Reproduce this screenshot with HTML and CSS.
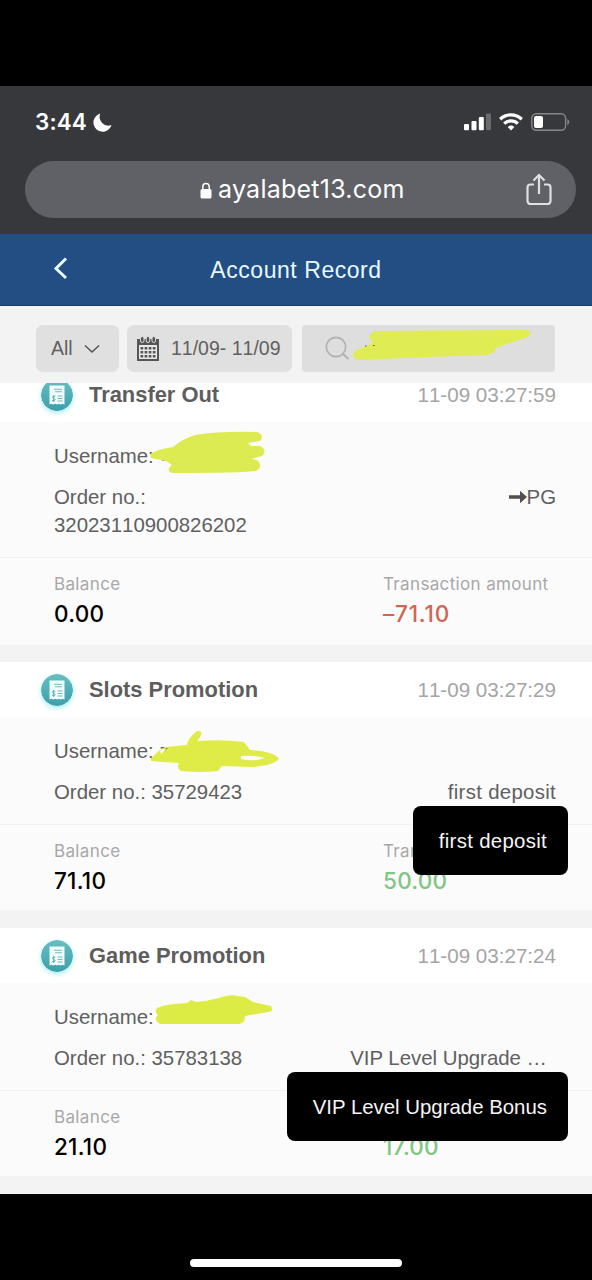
FILE: index.html
```html
<!DOCTYPE html>
<html lang="en">
<head>
<meta charset="utf-8">
<title>Account Record</title>
<link rel="stylesheet" href="styles.css">
</head>
<body>
<svg class="defs" width="0" height="0">
  <defs>
    <linearGradient id="teal" x1="0" y1="0" x2="0" y2="1"><stop offset="0" stop-color="#66bfc3"/><stop offset="1" stop-color="#3b9faa"/></linearGradient>
    <symbol id="receipt" viewBox="0 0 32 32">
      <circle cx="16" cy="16" r="16" fill="url(#teal)"/>
      <path d="M8.5 6.500H23.500v19l-1.900-.8-1.900.8-1.900-.8-1.800.8-1.900-.8-1.900.8-1.900-.8-1.800.8z" fill="#f3fbfb"/>
      <path d="M13 10.300h8M14 12.800h7M16.500 17h5M16.500 19.500h5M16.500 22h5" stroke="#6fbcc1" stroke-width="1.100"/>
      <path d="M14.300 17.400c-2.800-1-3.800 1.400-1.600 2.100 2.500.6 1.600 2.900-1.600 1.900M12.700 16v7" fill="none" stroke="#58aeb5" stroke-width="1"/>
    </symbol>
  </defs>
</svg>
<div class="phone">
  <header class="browser">
    <div class="status">
      <span class="time">3:44</span>
      <svg class="moon" width="19" height="19" viewBox="0 0 19 19"><path d="M7.300.6A9.200 9.200 0 1 0 18.500 12 8.700 8.700 0 0 1 7.300.6z" fill="#fff"/></svg>
      <svg class="signals" width="107" height="20" viewBox="0 0 107 20">
        <g fill="#fff"><rect x="1" y="12" width="5" height="6.300" rx="1"/><rect x="8.500" y="9" width="5" height="9.300" rx="1"/><rect x="15.800" y="5" width="5" height="13.300" rx="1"/><rect x="23" y="1.500" width="5" height="16.800" rx="1" opacity=".25"/></g>
        <g fill="none" stroke="#fff" stroke-width="3.300"><path d="M37.200 7.300a15.500 15.500 0 0 1 21.600 0"/><path d="M41.200 11.600a9.800 9.800 0 0 1 13.600 0"/></g>
        <path d="M48 18.500l-3.300-3.500a5 5 0 0 1 6.600 0z" fill="#fff"/>
        <rect x="68.800" y="1.700" width="33.800" height="16.600" rx="4.500" fill="none" stroke="#85868a" stroke-width="1.400"/>
        <rect x="71" y="4" width="9" height="12" rx="2" fill="#fff"/><path d="M104.300 7c2.500 1 2.500 5 0 6z" fill="#85868a"/>
      </svg>
    </div>
    <div class="address">
      <svg class="lock" width="12" height="17" viewBox="0 0 12 17"><rect x=".5" y="7" width="11" height="9.500" rx="1.600" fill="#fff"/><path d="M2.800 8V4.600a3.200 3.200 0 0 1 6.400 0V8" fill="none" stroke="#fff" stroke-width="1.500"/></svg>
      <span class="url">ayalabet13.com</span>
      <svg class="share" width="28" height="34" viewBox="0 0 28 34" fill="none" stroke="#dfe0e2" stroke-width="2.200"><path d="M9 11.500H5.500a3 3 0 0 0-3 3V28a3 3 0 0 0 3 3h17a3 3 0 0 0 3-3V14.500a3 3 0 0 0-3-3H19M14 21V2M8.500 7.500L14 2l5.500 5.500"/></svg>
    </div>
  </header>
  <nav class="nav">
    <svg class="back" width="16" height="24" viewBox="0 0 16 24"><path d="M13 2.500L3 12.500l10 9.500" fill="none" stroke="#e8faff" stroke-width="3"/></svg>
    <h1 class="title">Account Record</h1>
  </nav>
  <div class="filters">
    <div class="filter all"><span>All</span><svg width="16" height="10" viewBox="0 0 16 10"><path d="M1 1.500l7 6.500 7-6.500" fill="none" stroke="#555" stroke-width="1.500"/></svg></div>
    <div class="filter dates">
      <svg width="22" height="25" viewBox="0 0 22 25"><path d="M0 3h22v22H0z" fill="#555"/><path d="M2 9h18v14H2z" fill="#e8e8e8"/><path d="M3.500 12.300h15M3.500 16.300h15M3.500 20.300h15" stroke="#555" stroke-width="2.600" stroke-dasharray="2.700 1.400"/><g fill="#555" stroke="#e0e0e0"><rect x="3.500" y=".5" width="3.500" height="6" rx="1.700"/><rect x="9.200" y=".5" width="3.500" height="6" rx="1.700"/><rect x="15" y=".5" width="3.500" height="6" rx="1.700"/></g></svg>
      <span>11/09- 11/09</span>
    </div>
    <div class="filter search">
      <svg width="25" height="25" viewBox="0 0 25 25" fill="none" stroke="#b1b1b1"><circle cx="11" cy="11" r="9.700" stroke-width="1.700"/><path d="M18 18l5.500 5" stroke-width="2"/></svg>
      <svg class="scribble" width="253" height="47" viewBox="302 325 253 47"><path d="M374 331L524 330Q535 331 528 337L495 348Q497 353 487 355L404 358 358 360Q350 356 355 351L368 345Q375 344 371 340 366 337 374 331z" fill="#e0ec54"/><path d="M365 346h1.500M373 345.500h1.500" stroke="#555"/></svg>
    </div>
  </div>
  <main class="list">
    <article class="card first">
      <div class="head"><svg class="badge"><use href="#receipt"/></svg><h2>Transfer Out</h2><time>11-09 03:27:59</time></div>
      <div class="info"><p>Username: </p><div class="row"><p>Order no.:<br>32023110900826202</p><p class="note"><svg width="18" height="14" viewBox="0 0 18 14"><path d="M0 5.200h11V.8L18 7l-7 6.200V8.800H0z" fill="#505050"/></svg>PG</p></div></div>
      <div class="sums"><div><small>Balance</small><b>0.00</b></div><div><small>Transaction amount</small><b class="minus">–71.10</b></div></div>
      <svg class="scribble" width="592" height="279" viewBox="0 367 592 279"><path d="M162 460l5-1" stroke="#777" stroke-width="2"/><path d="M150 454Q158 449 173 447 184 438 195 435 220 431 257 432 265 435 260 441L248 443 251 446 260 446Q268 450 262 456L251 459 257 460Q264 466 256 471L244 472Q220 473 172 473 165 470 172 465L166 461 151 458z" fill="#ddeb53"/></svg>
    </article>
    <article class="card">
      <div class="head"><svg class="badge"><use href="#receipt"/></svg><h2>Slots Promotion</h2><time>11-09 03:27:29</time></div>
      <div class="info"><p>Username: z</p><div class="row"><p>Order no.: 35729423</p><p class="note wide">first deposit</p></div></div>
      <div class="sums"><div><small>Balance</small><b>71.10</b></div><div><small>Transaction amount</small><b class="plus">50.00</b></div></div>
      <svg class="scribble" width="592" height="248" viewBox="0 662 592 248"><path fill-rule="evenodd" d="M151 758L160 750 165 747 187 745Q188 738 197 731 204 730 200 737L197 741Q224 739 244 742L250 750Q272 751 279 758 277 765 252 767L222 766 218 771Q200 773 181 771 176 768 179 763 162 762 151 761zM160 750L161 754 168 748zM241 756L241 759Q255 762 265 758 254 755 241 756z" fill="#dfec47"/></svg>
      <div class="tip wide">first deposit</div>
    </article>
    <article class="card last">
      <div class="head"><svg class="badge"><use href="#receipt"/></svg><h2>Game Promotion</h2><time>11-09 03:27:24</time></div>
      <div class="info"><p>Username: </p><div class="row"><p>Order no.: 35783138</p><p class="note cut">VIP Level Upgrade …</p></div></div>
      <div class="sums"><div><small>Balance</small><b>21.10</b></div><div><small>Transaction amount</small><b class="plus">17.00</b></div></div>
      <svg class="scribble" width="592" height="248" viewBox="0 928 592 248"><path d="M157 1008Q165 1004 187 1003L191 1000 196 1002Q208 1001 219 998 231 994 237 996L245 997 253 1002 271 1006Q274 1012 268 1012L245 1016Q245 1024 238 1024L160 1024Q153 1020 158 1015 154 1012 157 1008z" fill="#ddeb45"/></svg>
      <div class="tip">VIP Level Upgrade Bonus</div>
    </article>
  </main>
  <footer class="home"><span></span></footer>
</div>
</body>
</html>
```

FILE: styles.css
```css
* { box-sizing: border-box; }
body { margin: 0; background: #000; font-family: "Liberation Sans", Arial, sans-serif; }
h1, h2, p { margin: 0; font-weight: 400; }
svg { display: block; flex: none; }
.defs { position: absolute; }
.phone { display: flex; flex-direction: column; width: 592px; height: 1280px; padding-top: 86px; overflow: hidden; background: #000; }
.browser { flex: none; height: 148px; padding: 0 16px 0 25px; background: #37383b; color: #fff; }
.status { display: flex; align-items: center; height: 75px; padding: 0 6px 3px 10px; }
.time { width: 58px; font: 600 22.500px/30px Inter, sans-serif; letter-spacing: .1px; white-space: nowrap; }
.signals { margin-left: auto; }
.address { display: flex; align-items: center; height: 57px; padding: 0 23px 0 175px; border-radius: 29px; background: #5f6166; }
.lock { margin-top: 1px; }
.url { margin-left: 6px; margin-top: -1px; font: 400 25px/32px Inter, sans-serif; letter-spacing: .25px; }
.share { margin-left: auto; }
.nav { display: grid; grid-template-columns: 1fr auto 1fr; align-items: center; flex: none; height: 72px; padding: 0 53px; background: #234e84; color: #e8faff; border-bottom: 1px solid #20395a; }
.back { margin-bottom: 3px; }
.title { padding-top: 2px; font-size: 23px; letter-spacing: .55px; }
.filters { display: flex; flex: none; gap: 8px; height: 77px; padding: 19px 37px 11px 36px; background: #f3f3f3; }
.filter { display: flex; align-items: center; border-radius: 7px; background: #e0e0e0; color: #606060; font-size: 19.500px; }
.all { width: 83px; padding-left: 15px; gap: 11px; }
.dates { width: 165px; padding-left: 10px; gap: 12px; white-space: nowrap; font-kerning: none; }
.search { position: relative; width: 253px; margin-left: 2px; padding-left: 23px; border-radius: 4px; background: #dedede; }
.scribble { position: absolute; left: 0; top: 0; }
.list { flex: none; height: 811px; overflow: hidden; background: #f3f3f3; }
.card { position: relative; height: 248px; margin-bottom: 18px; background: #fbfbfb; color: #606060; font-size: 20.400px; line-height: 28.500px; }
.first { height: 278px; margin-top: -16px; margin-bottom: 17px; }
.head { display: flex; align-items: center; height: 55px; padding: 0 36px 0 41px; background: #fff; }
.badge { width: 32px; height: 32px; margin-right: 16px; border-radius: 50%; box-shadow: 0 2px 5px #a6edf2; }
.head h2 { padding-top: 2px; font-size: 21.900px; font-weight: 700; color: #5d5d5d; }
.head time { padding-top: 1px; margin-left: auto; color: #a5a5a5; font-size: 20.600px; font-kerning: none; }
.info { padding: 20px 36px 17px 54px; border-bottom: 1px solid #f0f0f0; font-kerning: none; }
.row { display: flex; justify-content: space-between; margin-top: 12px; }
.note { display: flex; align-items: center; height: 29px; }
.wide { letter-spacing: .3px; }
.cut { padding-right: 9px; font-kerning: normal; }
.sums { display: grid; grid-template-columns: 329px 1fr; padding: 13px 0 0 54px; font-family: Inter, sans-serif; }
.sums small { display: block; color: #a8a8a8; font-size: 17px; line-height: 27px; letter-spacing: .35px; }
.sums b { display: block; color: #000; font-size: 22.500px; font-weight: 500; line-height: 32px; letter-spacing: .25px; }
.sums .minus { color: #d16550; letter-spacing: .8px; }
.sums .plus { color: #7fc584; }
.tip { position: absolute; right: 24px; top: 144px; height: 69px; padding: 0 21px 0 26px; border-radius: 8px; background: #000; color: #f5f5f5; line-height: 71px; white-space: nowrap; }
.home { display: flex; justify-content: center; padding: 65px 0 0 0; }
.home span { width: 212px; height: 8px; border-radius: 4px; background: #fff; }
```
